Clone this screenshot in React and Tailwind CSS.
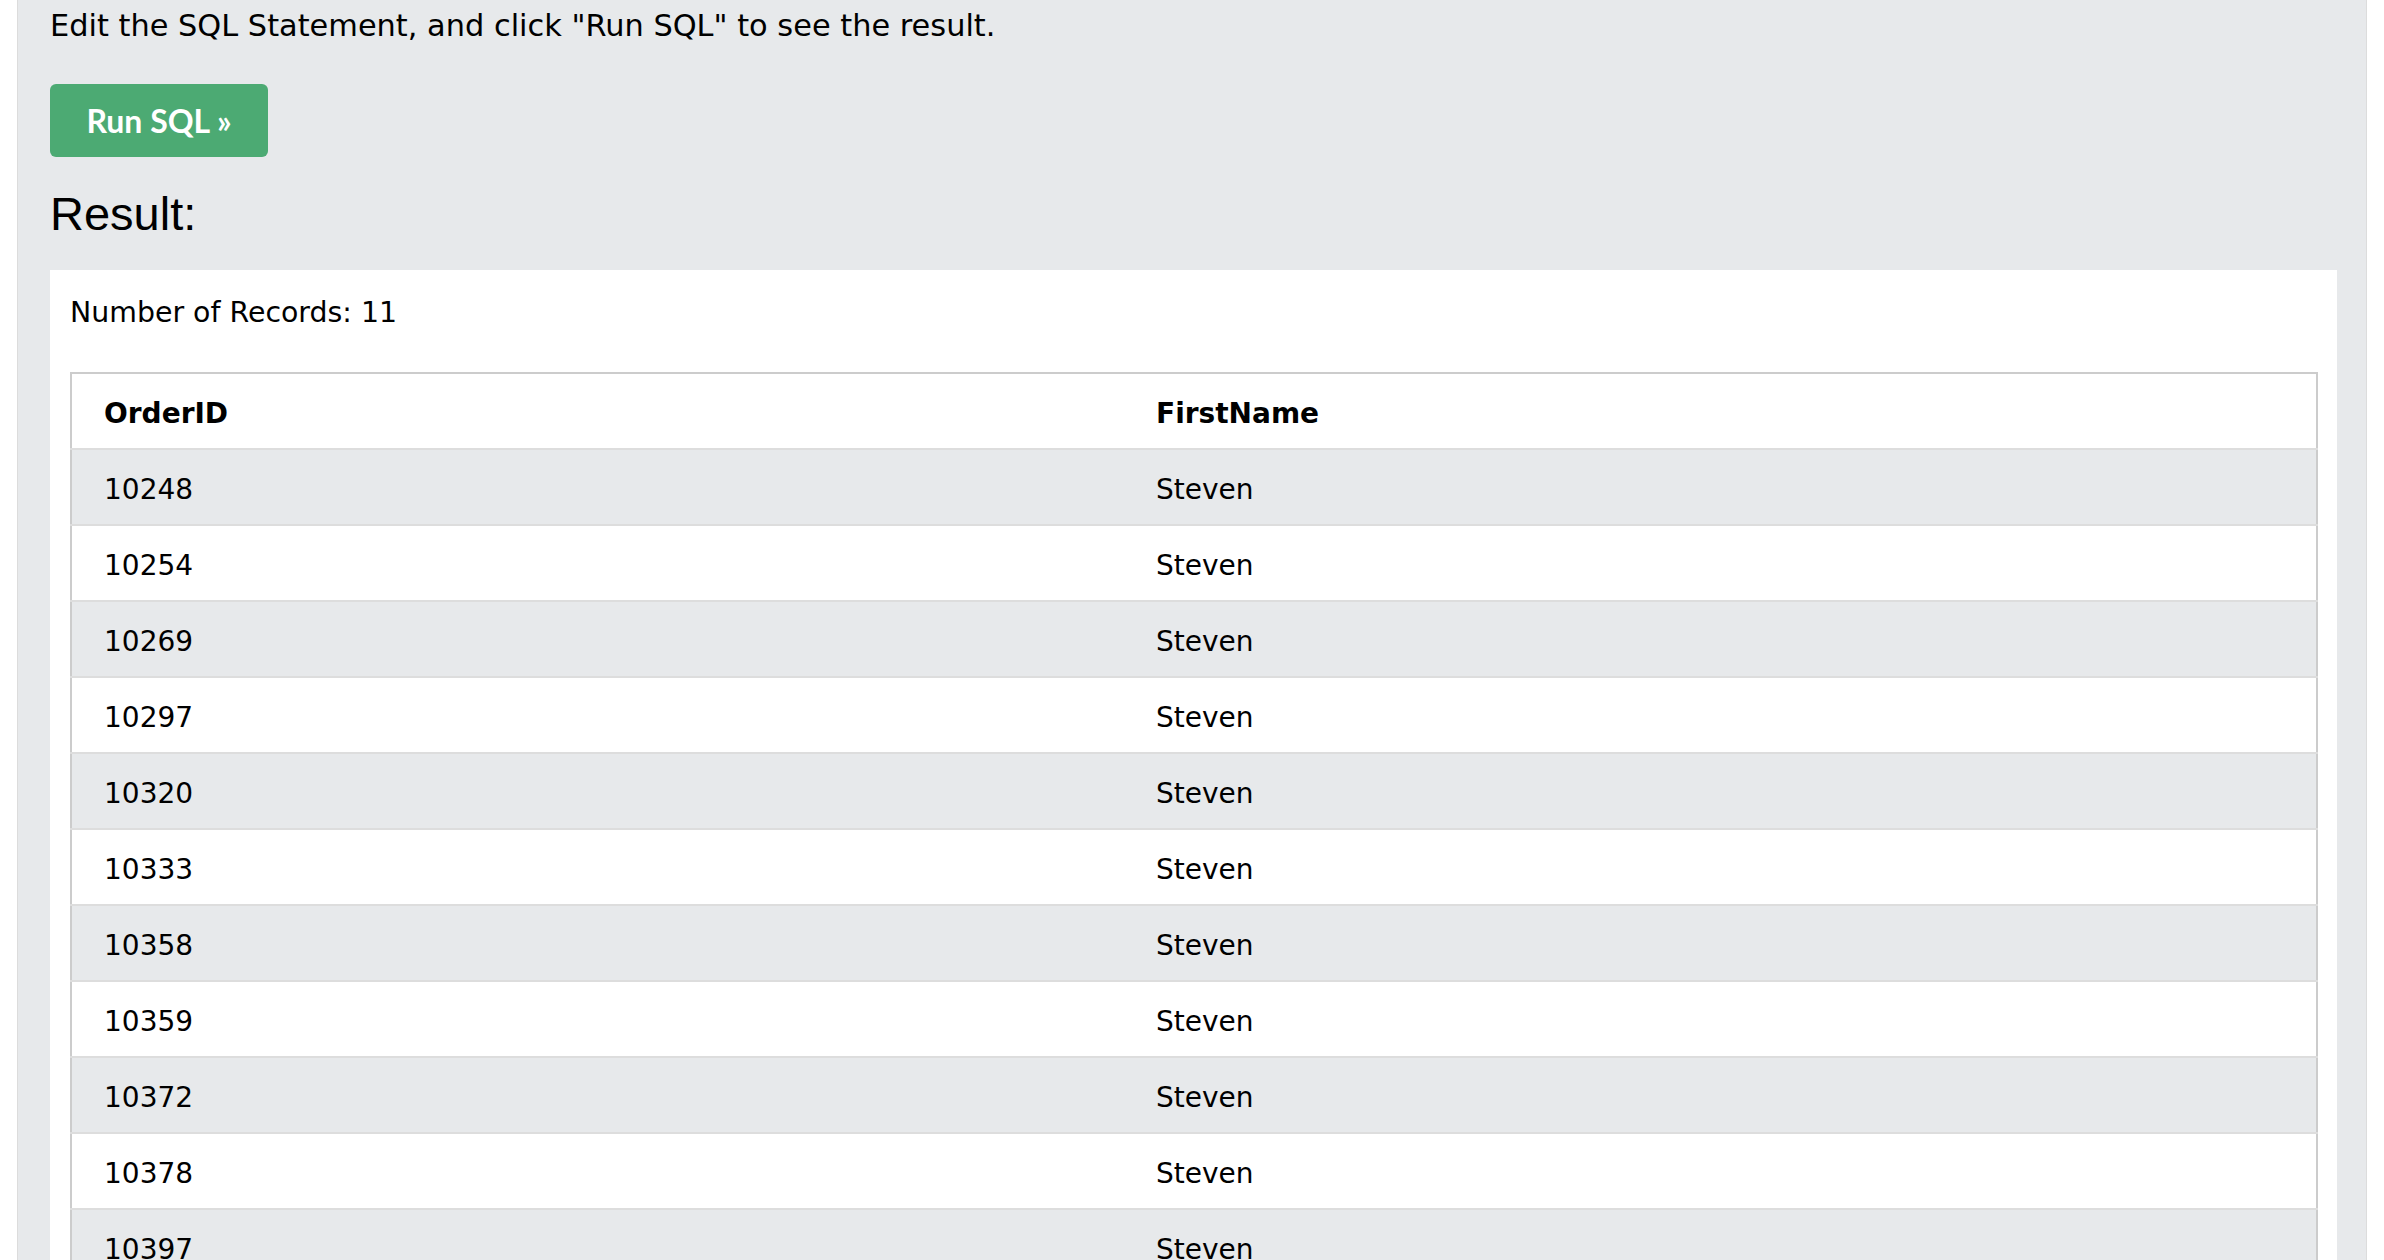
const rows = [
  '10248', '10254', '10269', '10297', '10320', '10333',
  '10358', '10359', '10372', '10378', '10397',
]

const verdana = "font-['DejaVu_Sans',Verdana,sans-serif]"

export default function App() {
  return (
    <div className="h-[1260px] overflow-hidden bg-white">
      <div className="mx-[17px] h-full border-x border-[#dcdcdc] bg-[#e7e9eb] pl-[32px] pr-[29px]">
        <div className={`${verdana} text-[30.4px] leading-[52px] text-black`}>
          Edit the SQL Statement, and click "Run SQL" to see the result.
        </div>
        <button className="mt-[32px] flex h-[73px] w-[218px] items-center justify-center rounded-[6px] bg-[#4caa73] font-['Lato',sans-serif] text-[32px] font-bold text-white">
          Run SQL »
        </button>
        <h2 className="mt-[29px] font-['Liberation_Sans',Arial,sans-serif] text-[47px] leading-[56px] text-black">
          Result:
        </h2>
        <section className="mt-[28px] bg-white pl-[20px] pr-[19px] pt-[22px]">
          <div className={`${verdana} text-[28.4px] leading-[42px] text-black`}>Number of Records: 11</div>
          <table className={`mt-[38px] w-full border-collapse border-2 border-[#cccccc] text-left ${verdana} text-[28px] text-black`}>
            <thead>
              <tr className="h-[76px] border-b-2 border-[#dddddd] bg-white">
                <th className="w-[1053px] pl-[32px] pt-[5px] font-bold">OrderID</th>
                <th className="pl-[32px] pt-[5px] font-bold">FirstName</th>
              </tr>
            </thead>
            <tbody>
              {rows.map((id, i) => (
                <tr key={id} className={`h-[76px] border-b-2 border-[#dddddd] ${i % 2 === 0 ? 'bg-[#e7e9eb]' : 'bg-white'}`}>
                  <td className="pl-[32px] pt-[5px]">{id}</td>
                  <td className="pl-[32px] pt-[5px]">Steven</td>
                </tr>
              ))}
            </tbody>
          </table>
        </section>
      </div>
    </div>
  )
}
